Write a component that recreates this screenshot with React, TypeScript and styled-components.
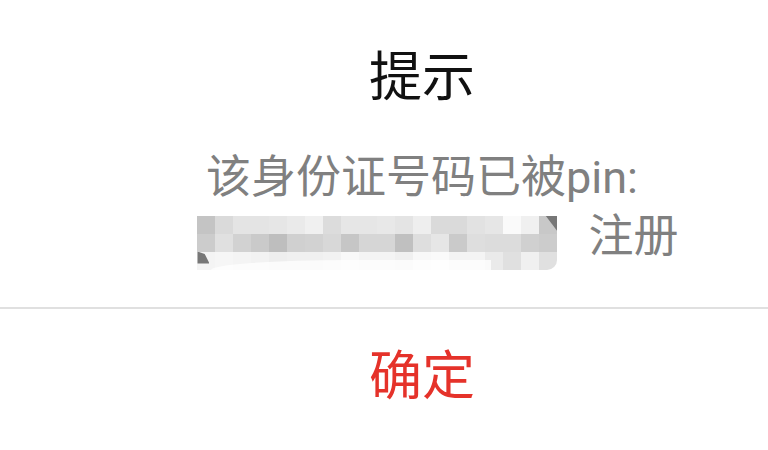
import React from "react";
import styled, { createGlobalStyle } from "styled-components";

const GlobalStyle = createGlobalStyle`
	html, body {
		margin: 0;
		padding: 0;
		background: #ffffff;
	}
	body {
		font-family: Roboto, "Noto Sans CJK SC", sans-serif;
		overflow: hidden;
	}
`;

const Dialog = styled.div`
	display: flex;
	flex-direction: column;
	width: 768px;
	height: 450px;
	background: #ffffff;
`;
const Content = styled.div`
	display: flex;
	flex-direction: column;
	align-items: center;
	padding: 48px 0 41px 76px;
`;
const Title = styled.div`
	font-size: 53px;
	line-height: 60px;
	color: #111111;
	margin-bottom: 40px;
`;
const Message = styled.div`
	display: flex;
	flex-direction: column;
	align-items: center;
	font-size: 45px;
	line-height: 59px;
	color: #808080;
`;
const Line = styled.div`
	display: flex;
	align-items: center;
	height: 59px;
`;
const MaskedLine = styled(Line)`
	gap: 31px;
	margin-left: 32px;
`;
const Mosaic = styled.div`
	position: relative;
	display: grid;
	grid-template-columns: repeat(20, 18px);
	grid-auto-rows: 18px;
	margin-top: 12px;
	border-radius: 0 0 10px 0;
	overflow: hidden;
`;
const Cell = styled.div<{ $shade: number }>`
	background: ${({ $shade }) => `rgb(${$shade}, ${$shade}, ${$shade})`};
`;
const Peek = styled.div<{ $corner: "bl" | "tr" }>`
	position: absolute;
	width: 12px;
	background: #777777;
	${({ $corner }) =>
		$corner === "bl"
			? "left: 0; top: 36px; height: 12px; clip-path: polygon(0 0, 60% 20%, 100% 100%, 0 100%);"
			: "right: 0; top: 0; height: 16px; clip-path: polygon(0 0, 100% 0, 100% 100%);"}
`;
const Smear = styled.div`
	position: absolute;
	left: 14px;
	top: 44px;
	width: 280px;
	height: 20px;
	background: rgba(255, 255, 255, 0.75);
	border-radius: 50% 0 0 0;
`;
const Divider = styled.div`
	height: 2px;
	background: #e0e0e0;
`;
const Footer = styled.div`
	display: flex;
	justify-content: center;
	padding: 38px 0 0 76px;
`;
const ConfirmButton = styled.button`
	border: none;
	background: none;
	padding: 0;
	font-family: inherit;
	font-size: 53px;
	line-height: 60px;
	color: #e5322a;
	cursor: pointer;
`;

const shades: number[][] = [
	[196, 218, 228, 228, 230, 234, 240, 220, 230, 230, 232, 228, 238, 218, 218, 226, 230, 250, 240, 200],
	[204, 224, 210, 202, 190, 208, 210, 216, 198, 214, 214, 192, 222, 230, 202, 222, 220, 220, 208, 204],
	[244, 246, 244, 242, 238, 240, 240, 242, 248, 244, 244, 240, 248, 250, 244, 244, 234, 224, 240, 224],
];

const App = () => {
	return (
		<>
			<GlobalStyle />
			<Dialog>
				<Content>
					<Title>提示</Title>
					<Message>
						<Line>该身份证号码已被pin:</Line>
						<MaskedLine>
							<Mosaic>
								{shades.map((row, r) =>
									row.map((shade, c) => <Cell key={`${r}-${c}`} $shade={shade} />)
								)}
								<Smear />
								<Peek $corner="bl" />
								<Peek $corner="tr" />
							</Mosaic>
							<span>注册</span>
						</MaskedLine>
					</Message>
				</Content>
				<Divider />
				<Footer>
					<ConfirmButton>确定</ConfirmButton>
				</Footer>
			</Dialog>
		</>
	);
};

export default App;
